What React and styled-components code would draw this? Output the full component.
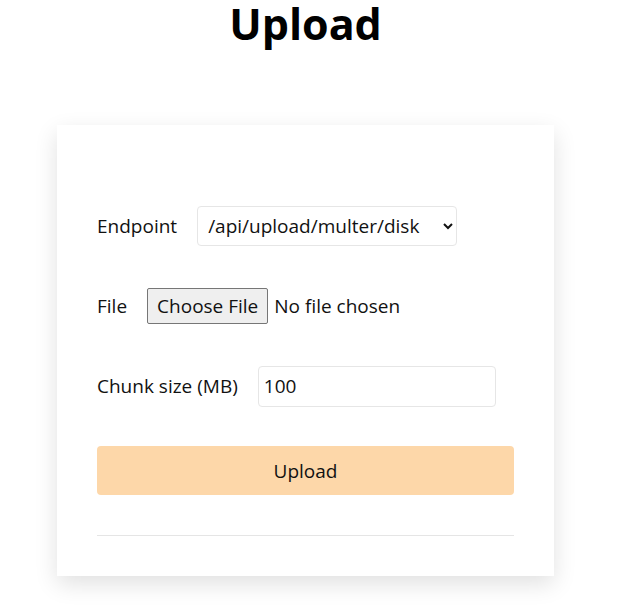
import React from 'react';
import styled, { createGlobalStyle } from 'styled-components';

const Global = createGlobalStyle`
    body {
        margin: 0;
        background: #fff;
        font-family: "Open Sans", "Noto Sans", sans-serif;
        color: #111;
    }
`

const Page = styled.div`
    width: 611px;
    padding-bottom: 38px;
    display: flex;
    flex-direction: column;
    align-items: center;
`

const Title = styled.h1`
    margin: 0;
    font-size: 43px;
    font-weight: 700;
    line-height: 48px;
    color: #000;
`

const Card = styled.form`
    margin-top: 77px;
    width: 497px;
    box-sizing: border-box;
    padding: 81px 40px 40px;
    background: #fff;
    box-shadow: 0 8px 22px rgba(0, 0, 0, 0.12);
    display: flex;
    flex-direction: column;
    gap: 40px;
`

const Row = styled.label`
    display: flex;
    align-items: center;
    gap: 20px;
    height: 40px;
    font-size: 19px;
`

const Select = styled.select`
    width: 260px;
    height: 40px;
    padding: 0 6px;
    font: inherit;
    color: #111;
    border: 1px solid #e6e6e6;
    border-radius: 4px;
    background: #fff;
`

const FileInput = styled.input`
    font: inherit;
    &::file-selector-button {
        font: inherit;
        height: 36px;
        padding: 0 9px;
        margin-right: 6px;
        background: #efefef;
        border: 1px solid #767676;
        border-radius: 2px;
        color: #111;
    }
`

const TextInput = styled.input`
    width: 238px;
    height: 41px;
    box-sizing: border-box;
    padding: 0 5px;
    font: inherit;
    color: #111;
    border: 1px solid #e6e6e6;
    border-radius: 4px;
`

const Submit = styled.button`
    height: 49px;
    border: none;
    border-radius: 4px;
    background: #fdd7a9;
    font: inherit;
    font-size: 19px;
    color: #111;
`

const Divider = styled.hr`
    margin: 0;
    border: none;
    border-top: 1px solid #e5e5e5;
`

const App = () => {
    return(
        <Page>
            <Global />
            <Title>Upload</Title>
            <Card onSubmit={e => e.preventDefault()}>
                <Row>
                    Endpoint
                    <Select defaultValue="/api/upload/multer/disk">
                        <option>/api/upload/multer/disk</option>
                        <option>/api/upload/multer/memory</option>
                    </Select>
                </Row>
                <Row>
                    File
                    <FileInput type="file" />
                </Row>
                <Row>
                    Chunk size (MB)
                    <TextInput type="number" defaultValue="100" />
                </Row>
                <Submit type="submit">Upload</Submit>
                <Divider />
            </Card>
        </Page>
    )
}

export default App
